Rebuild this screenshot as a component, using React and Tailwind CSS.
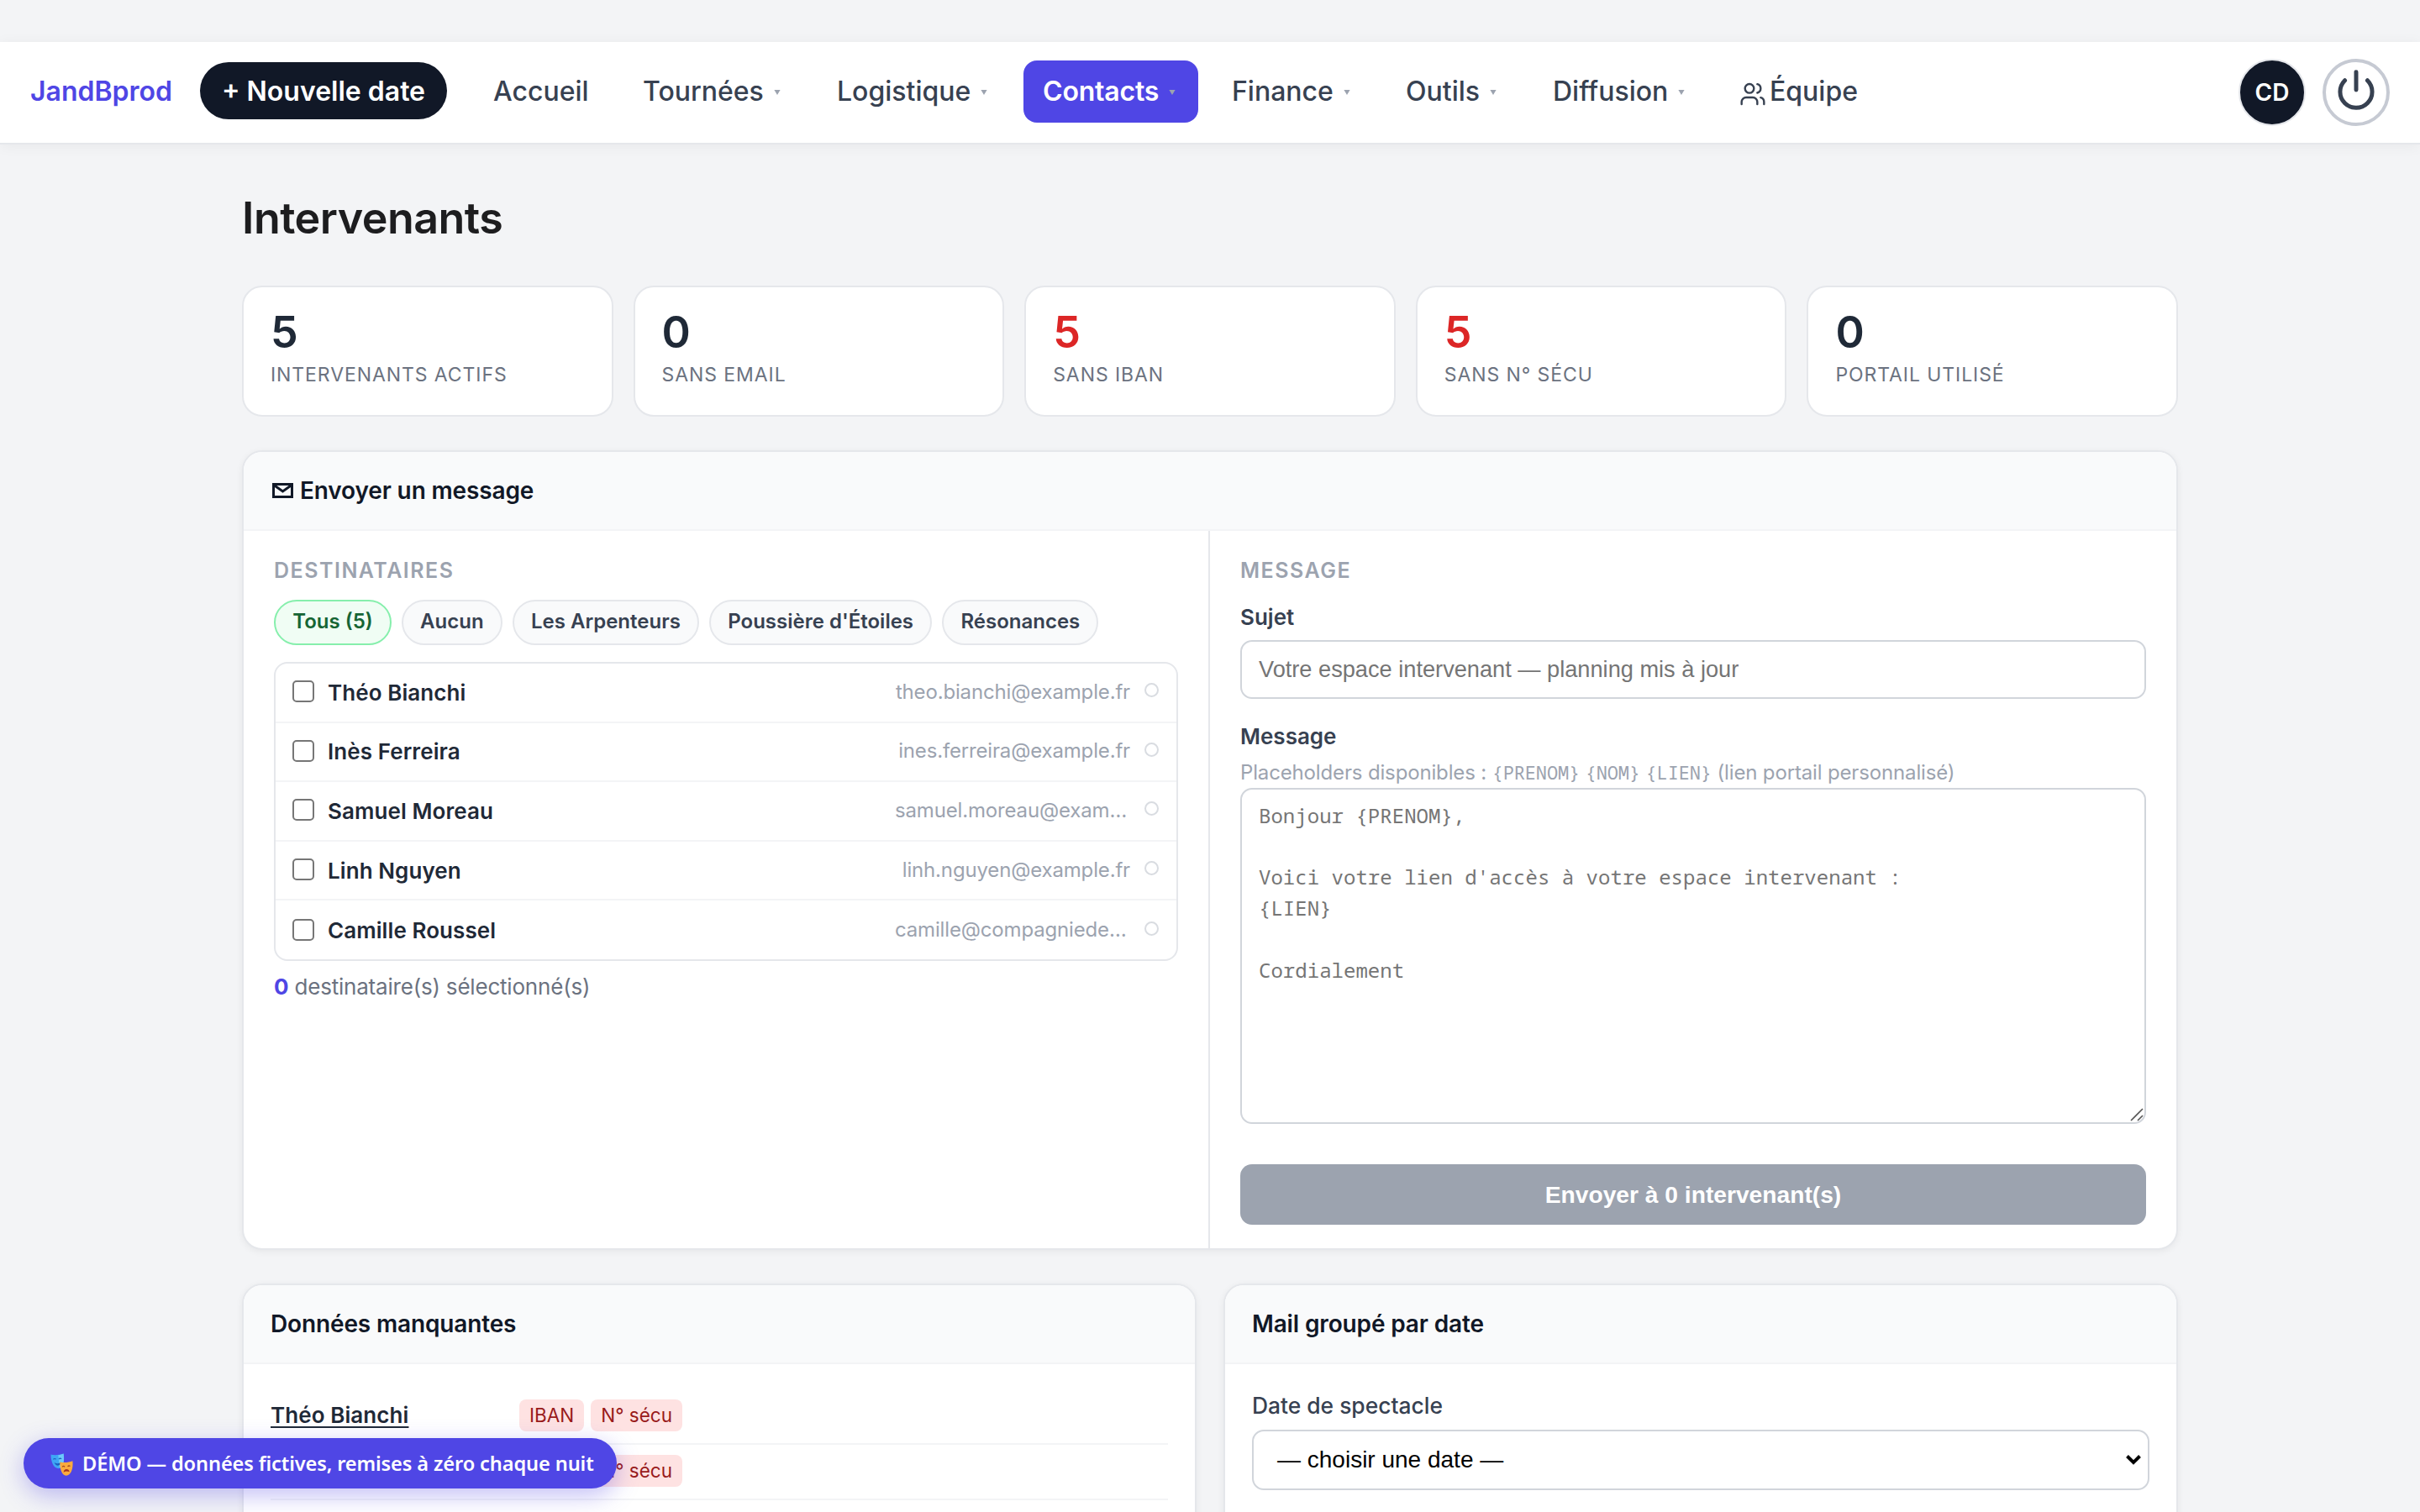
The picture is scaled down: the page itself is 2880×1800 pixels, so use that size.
import React from "react";

const NAV = [
  { label: "Accueil", w: "w-[162px]", arrow: false },
  { label: "Tournées", w: "w-[215px]", arrow: true },
  { label: "Logistique", w: "w-[230px]", arrow: true },
  { label: "Contacts", w: "w-[208px]", arrow: true, active: true },
  { label: "Finance", w: "w-[191px]", arrow: true },
  { label: "Outils", w: "w-[159px]", arrow: true },
  { label: "Diffusion", w: "w-[206px]", arrow: true },
];

const STATS = [
  { value: "5", label: "Intervenants actifs" },
  { value: "0", label: "Sans email" },
  { value: "5", label: "Sans IBAN", alert: true },
  { value: "5", label: "Sans N° sécu", alert: true },
  { value: "0", label: "Portail utilisé" },
];

const GROUPS = ["Aucun", "Les Arpenteurs", "Poussière d'Étoiles", "Résonances"];

const PEOPLE = [
  ["Théo Bianchi", "theo.bianchi@example.fr"],
  ["Inès Ferreira", "ines.ferreira@example.fr"],
  ["Samuel Moreau", "samuel.moreau@exam..."],
  ["Linh Nguyen", "linh.nguyen@example.fr"],
  ["Camille Roussel", "camille@compagniede..."],
];

function Arrow() {
  return (
    <svg className="ml-[12px] mt-[1px] h-[6px] w-[8px] shrink-0 fill-[#9ca3af]" viewBox="0 0 8 6">
      <path d="M0.4 0H7.6L4 6Z" />
    </svg>
  );
}

function NavBar() {
  return (
    <header className="mt-[50px] flex h-[122px] shrink-0 items-center border-b-2 border-[#e5e7eb] bg-white pl-9 pr-9 text-[32px] leading-none shadow-[0_2px_16px_rgba(0,0,0,0.05)]">
      <div className="mb-[2px] w-[202px] font-semibold text-[#4f46e5]">JandBprod</div>
      <button className="mr-[31px] flex h-[68px] w-[294px] -translate-y-[2px] items-center justify-center whitespace-nowrap rounded-full bg-[#111827] pt-[2px] font-semibold text-white">
        + Nouvelle date
      </button>
      <nav className="mb-[2px] flex items-center gap-4">
        {NAV.map((n) => (
          <div
            key={n.label}
            className={
              "flex h-[74px] items-center rounded-[16px] " +
              n.w +
              (n.active ? " bg-[#4f46e5] pl-[23px] font-semibold tracking-[-0.2px] text-white" : " pl-6 font-medium text-[#374151]")
            }
          >
            {n.label}
            {n.arrow && <Arrow />}
          </div>
        ))}
        <div className="flex h-[74px] items-center gap-1 pl-6 font-medium text-[#374151]">
          <svg className="mt-[5px] h-8 w-8" viewBox="0 0 24 24" fill="none" stroke="currentColor" strokeWidth="1.8" strokeLinecap="round" strokeLinejoin="round">
            <path d="M16 21v-2a4 4 0 0 0-4-4H6a4 4 0 0 0-4 4v2" />
            <circle cx="9" cy="7" r="4" />
            <path d="M22 21v-2a4 4 0 0 0-3-3.87" />
            <path d="M16 3.13a4 4 0 0 1 0 7.75" />
          </svg>
          Équipe
        </div>
      </nav>
      <div className="ml-auto flex items-center gap-5">
        <div className="flex size-20 items-center justify-center rounded-full border-2 border-[#e5e7eb] bg-[#111827] text-[28px] font-semibold text-white">
          CD
        </div>
        <div className="flex size-20 items-center justify-center rounded-full border-4 border-[#c6cad3] text-[#374151]">
          <svg className="-mt-[6px] size-[52px] shrink-0" viewBox="0 0 24 24" fill="none" stroke="currentColor" strokeWidth="2.3" strokeLinecap="round" strokeLinejoin="round">
            <path d="M18.2 6.8a8.8 8.8 0 1 1-12.4 0" />
            <path d="M12 2.2v9.8" />
          </svg>
        </div>
      </div>
    </header>
  );
}

function Card({ title, icon, className = "", children }) {
  return (
    <section className={"overflow-hidden rounded-[24px] border-2 border-[#e5e7eb] bg-white shadow-[0_2px_8px_rgba(0,0,0,0.06)] " + className}>
      <div className="flex h-[94px] items-center border-b-2 border-[#f3f4f6] bg-[#f9fafb] px-8 text-[28px] font-semibold tracking-[-0.14px] text-[#111827]">
        {icon}
        {title}
      </div>
      {children}
    </section>
  );
}

function Recipients() {
  return (
    <div className="w-[1150px] border-r-2 border-[#e5e7eb] pl-9 pr-9 pt-8">
      <div className="h-[50px] text-[25px] font-semibold uppercase leading-[31px] tracking-[0.06em] text-[#9ca3af]">Destinataires</div>
      <div className="flex gap-3 text-[24px] font-semibold leading-none text-[#374151]">
        <span className="flex h-[54px] items-center rounded-full border-2 border-[#86efac] bg-[#f0fdf4] px-[20.2px] pb-[2px] text-[#166534]">Tous (5)</span>
        {GROUPS.map((g) => (
          <span key={g} className="flex h-[54px] items-center rounded-full border-2 border-[#e5e7eb] bg-[#f9fafb] px-[20.2px] pb-[2px]">
            {g}
          </span>
        ))}
      </div>
      <div className="mt-5 h-[356px] rounded-[16px] border-2 border-[#e5e7eb]">
        {PEOPLE.map(([name, mail]) => (
          <div key={name} className="flex h-[70.6px] items-center border-b-2 border-[#f3f4f6] px-5 last:border-0">
            <span className="-mt-[2px] size-[26px] rounded-[5px] border-2 border-[#767676]" />
            <span className="ml-4 flex-1 text-[26px] font-semibold tracking-[0.08px] text-[#1f2937]">{name}</span>
            <span
              className={
                "-mt-[1px] whitespace-nowrap text-[24px] tracking-[-0.16px] text-[#9ca3af]" + (mail.endsWith("...") ? " w-[280px]" : "")
              }
            >
              {mail.replace("...", "…")}
            </span>
            <span className="-mt-[5px] ml-[17px] mr-[1px] size-[17px] rounded-full border-2 border-[#d9dce1]" />
          </div>
        ))}
      </div>
      <div className="mt-[11px] text-[26px] tracking-[-0.2px] text-[#6b7280]">
        <span className="font-bold text-[#4f46e5]">0</span> destinataire(s) sélectionné(s)
      </div>
    </div>
  );
}

function Composer() {
  return (
    <div className="flex-1 px-9 pt-8">
      <div className="h-[50px] text-[25px] font-semibold uppercase leading-[31px] tracking-[0.06em] text-[#9ca3af]">Message</div>
      <div className="h-12 text-[26px] font-semibold leading-[42px] text-[#374151]">Sujet</div>
      <div className="flex h-[70px] items-center rounded-[14px] border-2 border-[#d1d5db] px-5 font-['Liberation_Sans',sans-serif] text-[27.2px] text-[#757575]">
        Votre espace intervenant — planning mis à jour
      </div>
      <div className="mt-[25px] text-[26px] font-semibold leading-[40px] text-[#374151]">Message</div>
      <div className="mt-[4px] h-[37px] whitespace-pre text-[24px] leading-[37px] tracking-[-0.15px] text-[#9ca3af]">
        Placeholders disponibles :{" "}
        <span className="font-['Noto_Sans_Mono','DejaVu_Sans_Mono',monospace] text-[22px]">{"{PRENOM}"}</span>{" "}
        <span className="font-['Noto_Sans_Mono','DejaVu_Sans_Mono',monospace] text-[22px]">{"{NOM}"}</span>{" "}
        <span className="font-['Noto_Sans_Mono','DejaVu_Sans_Mono',monospace] text-[22px]">{"{LIEN}"}</span> (lien portail personnalisé)
      </div>
      <div className="relative h-[400px] whitespace-pre rounded-[14px] border-2 border-[#d1d5db] px-5 py-[13px] font-['Noto_Sans_Mono','DejaVu_Sans_Mono',monospace] text-[24px] leading-[36.7px] tracking-[0.03px] text-[#757575]">
        {"Bonjour {PRENOM},\n\nVoici votre lien d'accès à votre espace intervenant :\n{LIEN}\n\nCordialement"}
        <svg className="absolute bottom-[1px] right-[1px] size-4 stroke-[#555555]" viewBox="0 0 16 16" fill="none" strokeWidth="1.6">
          <path d="M1 15L15 1M9 15L15 9" />
        </svg>
      </div>
      <button className="mt-12 flex h-[72px] w-full items-center justify-center rounded-[14px] bg-[#9ca3af] pt-[1px] font-['Liberation_Sans',sans-serif] text-[28.2px] font-bold text-white">
        Envoyer à 0 intervenant(s)
      </button>
    </div>
  );
}

function Tag({ children }) {
  return (
    <span className="mr-2 flex h-[38px] items-center rounded-[8px] bg-[#fee2e2] px-3 text-[22.5px] leading-none text-[#991b1b]">{children}</span>
  );
}

function MissingRow({ name }) {
  return (
    <div className="flex h-[66px] items-center border-b-2 border-[#f3f4f6] pb-[2px]">
      <span className="-mt-[2px] w-[296px] text-[26px] font-semibold tracking-[0.08px] text-[#1f2937] underline decoration-2 underline-offset-[4px]">{name}</span>
      <Tag>IBAN</Tag>
      <Tag>N° sécu</Tag>
    </div>
  );
}

function Masks() {
  return (
    <svg className="mr-[11px] size-[27px] shrink-0" viewBox="0 0 26 26" fill="none">
      <path d="M0.5 1.5C3 2.6 11 2.2 15 0.5C16.2 7 15.5 16.5 9 17.5C3 17 0.5 9 0.5 1.5Z" fill="#3ea6f5" />
      <path d="M9 2.2C11.5 2 13.5 1.2 15 0.5C16.2 7 15.5 15 10.5 17.2Z" fill="#6cc9fb" />
      <path d="M3.3 7.2Q4.8 5.4 6.4 7M9.6 6.8Q11.2 5 12.6 6.6" stroke="#1c5fc0" strokeWidth="1.1" />
      <path d="M4.5 10.5Q8.5 13 12.3 10.2Q11.6 14 8.6 14.2Q5.7 14 4.5 10.5Z" fill="#1c5fc0" />
      <path d="M11 10C15 11.2 21 10.8 25.4 9C26.2 16 24.5 25 18 25.7C12.6 25 10.6 17 11 10Z" fill="#fbab3e" />
      <path d="M13.6 15.6Q15 14.2 16.4 15.6M19.8 15.2Q21.2 13.8 22.6 15" stroke="#a34b1e" strokeWidth="1.2" />
      <path d="M15 21.8Q15.6 18.2 18.4 18.2Q21.2 18.2 21.8 21.4Q18.4 19.8 15 21.8Z" fill="#a3311e" />
    </svg>
  );
}

export default function App() {
  return (
    <div className="relative flex h-[1800px] w-[2880px] flex-col overflow-hidden bg-[#f3f4f6] font-['Inter',sans-serif]">
      <NavBar />
      <main className="mx-auto w-[2304px]">
        <h1 className="flex h-[168px] items-center pt-[8px] text-[52px] font-semibold tracking-[-0.01em] text-[#1d1d1f]">Intervenants</h1>
        <div className="grid grid-cols-5 gap-6">
          {STATS.map((s) => (
            <div key={s.label} className="h-[156px] rounded-[24px] border-2 border-[#e5e7eb] bg-white px-8 pt-7">
              <div className={"text-[52px] font-semibold leading-[52px] " + (s.alert ? "text-[#dc2626]" : "text-[#1f2937]")}>{s.value}</div>
              <div className="mt-[8px] text-[23px] uppercase leading-[32px] tracking-[0.04em] text-[#6b7280]">{s.label}</div>
            </div>
          ))}
        </div>
        <Card
          className="mt-10 h-[952px]"
          title="Envoyer un message"
          icon={
            <svg className="mr-[8px] ml-[2px] h-[18px] w-[25px]" viewBox="0 0 25 18" fill="none" stroke="#111827" strokeWidth="3">
              <path d="M1.5 1.5H23.5V16.5H1.5Z" />
              <path d="M2 2.5L12.5 10L23 2.5" />
            </svg>
          }
        >
          <div className="flex h-[854px]">
            <Recipients />
            <Composer />
          </div>
        </Card>
        <div className="mt-10 grid grid-cols-2 gap-8">
          <Card title="Données manquantes" className="h-[400px]">
            <div className="px-8 pt-[30px]">
              <MissingRow name="Théo Bianchi" />
              <MissingRow name="Inès Ferreira" />
            </div>
          </Card>
          <Card title="Mail groupé par date" className="h-[400px]">
            <div className="px-8 pt-[28px]">
              <div className="h-[50px] text-[26.4px] font-medium leading-[42px] text-[#374151]">Date de spectacle</div>
              <div className="flex h-[72px] items-center justify-between rounded-[14px] border-2 border-[#d1d5db] pl-7 pr-[8px] font-['Liberation_Sans',sans-serif] text-[28px] text-black">
                — choisir une date —
                <svg className="h-[12px] w-[18px]" viewBox="0 0 18 12" fill="none" stroke="black" strokeWidth="4">
                  <path d="M1.5 1.5L9 9L16.5 1.5" />
                </svg>
              </div>
            </div>
          </Card>
        </div>
      </main>
      <div className="absolute left-7 top-[1712px] flex h-[60px] w-[706px] items-center whitespace-pre rounded-full bg-[#4f46e5] pl-8 pt-[2px] font-['Noto_Sans',sans-serif] text-[23.6px] font-semibold tracking-[-0.12px] text-white shadow-[0_8px_28px_rgba(79,70,229,0.35)]">
        <Masks />
        DÉMO — données fictives, remises à zéro chaque nuit
      </div>
    </div>
  );
}
